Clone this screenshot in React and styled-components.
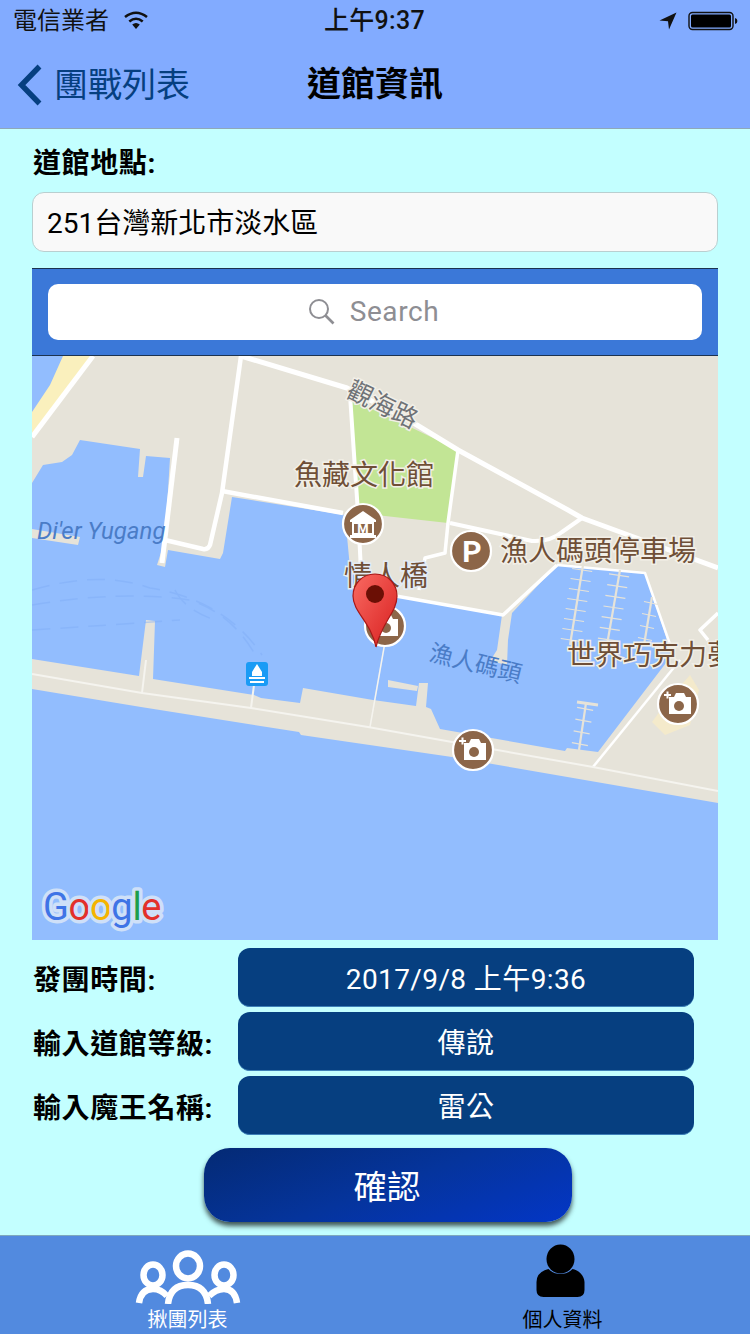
import React from "react";
import styled, { createGlobalStyle } from "styled-components";

const UI = `Roboto, "Noto Sans CJK TC", sans-serif`;

const Global = createGlobalStyle`
  html, body { margin: 0; padding: 0; background: #c3ffff; }
  * { box-sizing: border-box; }
`;

const Page = styled.div`
  width: 750px; height: 1334px; display: flex; flex-direction: column;
  overflow: hidden; background: #c3ffff; font-family: ${UI}; color: #000;
`;
const Header = styled.header`
  background: #82abff; border-bottom: 1px solid #8fa8b8; height: 129px; flex: none;
`;
const StatusBar = styled.div`
  height: 40px; display: grid; grid-template-columns: 1fr auto 1fr; align-items: center;
  padding: 1px 12px 0 13px; font-size: 24px; line-height: 30px; color: #111;
`;
const StatusSide = styled.div`
  display: flex; align-items: center; gap: ${p => p.$gap || 14}px;
  justify-content: ${p => (p.$end ? "flex-end" : "flex-start")};
`;
const Clock = styled.span`
  font-size: 25px; letter-spacing: .3px; font-weight: 500; margin-left: -2px;
`;
const NavBar = styled.nav`
  height: 88px; position: relative; display: flex; align-items: center; justify-content: center;
`;
const BackLink = styled.div`
  position: absolute; left: 17px; top: 23px; display: flex; align-items: center; gap: 11px;
  font-size: 34px; line-height: 44px; color: #063f80;
`;
const Title = styled.h1`
  margin: 0; font-size: 34px; line-height: 44px; font-weight: 700; color: #000;
`;
const Content = styled.main`
  flex: 1; display: flex; flex-direction: column; padding: 13px 32px 0;
`;
const FieldLabel = styled.div`
  font-size: 28px; line-height: 38px; font-weight: 700; white-space: nowrap; color: #000;
  padding: 3px 0 0 1px; margin-bottom: -3px; letter-spacing: .6px;
`;
const AddressInput = styled.div`
  margin-top: 12px; height: 60px; border: 1px solid #b9cfd0; border-radius: 12px; background: #f9f9f9;
  display: flex; align-items: center; padding: 0 0 3px 14px; font-size: 28px; color: #000;
`;
const MapPanel = styled.section`
  margin-top: 16px; width: 686px; display: flex; flex-direction: column;
`;
const SearchBar = styled.div`
  height: 88px; background: #3b78d8; border-top: 1px solid #1c3350; border-bottom: 1px solid #1c3350;
  padding: 15px 16px;
`;
const SearchField = styled.div`
  height: 56px; background: #fff; border-radius: 10px; display: flex; align-items: center;
  justify-content: center; gap: 15px; color: #8e8e93; font-size: 28px; letter-spacing: .6px;
  padding: 0 3px 1px 0;
`;
const MapCanvas = styled.svg`
  display: block; width: 686px; height: 584px; background: #92bdfe;
`;
const Rows = styled.div`
  margin-top: 8px; display: flex; flex-direction: column; gap: 5px;
`;
const Row = styled.div`
  display: grid; grid-template-columns: 206px 456px; align-items: center;
`;
const ValueButton = styled.div`
  height: 59px; background: #063f80; border-radius: 12px; border-bottom: 1px solid #3d80b8;
  color: #fff; font-size: 28px; letter-spacing: .4px; display: flex; align-items: center; justify-content: center;
`;
const ConfirmButton = styled.div`
  margin: 13px 0 0 172px; width: 368px; height: 74px; border-radius: 26px; color: #fff; font-size: 33.5px;
  background: linear-gradient(160deg, #042a74 0%, #05349c 50%, #0336c6 100%);
  box-shadow: 0 4px 5px rgba(20, 30, 30, .75);
  display: flex; align-items: center; justify-content: center; padding: 0 2px 2px 0;
`;
const TabBar = styled.footer`
  flex: none; height: 99px; background: #528adf; border-top: 1px solid #7ea9bd;
  display: grid; grid-template-columns: 1fr 1fr;
`;
const Tab = styled.div`
  display: flex; flex-direction: column; align-items: center; padding-top: 8px;
`;
const TabIcon = styled.svg`
  display: block; width: 112px; height: 60px;
`;
const TabLabel = styled.span`
  margin-top: 4px; font-size: 20px; line-height: 24px; color: ${p => p.$color};
`;

const Wifi = () => (
  <svg width="26" height="19" viewBox="0 0 26 19">
    <path d="M13 18 L9.2 13.6 Q13 10.6 16.8 13.6Z" fill="#111" />
    <path d="M6.3 10.5 Q13 5 19.7 10.5" fill="none" stroke="#111" strokeWidth="2.6" />
    <path d="M2 6 Q13 -2.5 24 6" fill="none" stroke="#111" strokeWidth="2.6" />
  </svg>
);
const LocationArrow = () => (
  <svg width="18" height="18" viewBox="0 0 18 18"><path d="M17.5 .5 L.5 8.5 L9 9.2 L10 17.5Z" fill="#111" /></svg>
);
const Battery = () => (
  <svg width="50" height="20" viewBox="0 0 50 20">
    <rect x="1" y="1.5" width="44" height="17" rx="3.5" fill="none" stroke="#111" strokeWidth="1.4" />
    <rect x="3" y="3.5" width="40" height="13" rx="1.5" fill="#000" />
    <path d="M47 7 q2.4 .6 2.4 3 t-2.4 3z" fill="#111" />
  </svg>
);
const Chevron = () => (
  <svg width="26" height="42" viewBox="0 0 26 42">
    <path d="M22.5 2.5 L4.5 21 L22.5 39.5" fill="none" stroke="#063f80" strokeWidth="5.4" />
  </svg>
);
const SearchIcon = () => (
  <svg width="27" height="27" viewBox="0 0 27 27" fill="none" stroke="#8e8e93">
    <circle cx="11" cy="11" r="9" strokeWidth="2" /><path d="M17.5 17.5 L25.5 25.5" strokeWidth="2.6" />
  </svg>
);

const Camera = ({ x, y }) => (
  <g transform={`translate(${x} ${y})`}>
    <circle r="20" fill="#8c6649" stroke="#fff" strokeWidth="2.2" />
    <path d="M-10 -6 h5 l2 -4 h8 l2 4 h5 v17 h-22z" fill="#fff" transform="translate(1 -1)" />
    <circle cx="1" cy="2" r="5" fill="#8c6649" />
    <path d="M-14 -9 h7 M-10.5 -12.5 v7" stroke="#fff" strokeWidth="2" />
  </g>
);
const MapLabel = ({ x, y, size = 28, color = "#6f4f37", halo = "#f2efe7", angle, children, ...rest }) => (
  <text x={x} y={y} fontSize={size} fill={color} stroke={halo} strokeWidth="3" paintOrder="stroke"
    fontFamily={UI} transform={angle ? `rotate(${angle} ${x} ${y})` : undefined} {...rest}>{children}</text>
);
const Ticks = ({ x1, y1, x2, y2, n, w = 10 }) => (
  <g stroke="#e6e3d9" fill="none">
    <path d={`M${x1} ${y1} L${x2} ${y2}`} strokeWidth="2.2" />
    {Array.from({ length: n }, (_, i) => {
      const t = (i + .5) / n, cx = x1 + (x2 - x1) * t, cy = y1 + (y2 - y1) * t;
      return <path key={i} d={`M${cx - w} ${cy - 1.5} L${cx + w} ${cy + 1.5}`} strokeWidth="1.2" />;
    })}
  </g>
);

const MapDrawing = () => (
  <MapCanvas viewBox="32 356 686 584">
    <defs>
      <linearGradient id="pin" x1="0" y1="0" x2="1" y2="1">
        <stop offset="0" stopColor="#f96a62" /><stop offset="1" stopColor="#d81f1f" />
      </linearGradient>
    </defs>
    <path d="M63 356 H93 L32 437 V412 L50 385Z" fill="#faf0bd" />
    <path d="M32 659 L139 676 L146 620 L155 621 L153 679 L254 695 L261 698 L300 703 L303 688 L373 700 L416 706 L419 683 L428 683 L426 707 L431 709 L440 729 L565 751 L567 748 L598 752 L672 655 L645 573 L557 565 L512 613 L508 640 L507 665 L490 661 L497 650 L502 615 L385 595 L362 590 L350 568 L345 515 L232 497 L223 553 L220 559 L168 550 L165 567 L157 565 L165 540 L170 458 L146 456 L143 477 L138 477 L140 449 L80 440 L72 455 L62 462 L43 465 L32 483 V437 L93 356 H718 V803 L452 757 L301 735 L299 732 L141 707 L32 689Z" fill="#e6e3d9" />
    <path d="M32 529 L80 537 L78 545 L32 538Z" fill="#e6e3d9" />
    <path d="M388 680 L418 686 L417 691 L388 687Z" fill="#e6e3d9" />
    <path d="M350 398 L458 450 L448 523 L358 513Z" fill="#c2e595" />
    <g fill="none" stroke="#7fadf7" strokeWidth="1.5" strokeDasharray="18 10" opacity=".45">
      <path d="M32 590 Q100 570 150 588 Q225 600 262 655" />
      <path d="M32 605 Q120 590 190 600 Q235 615 258 660" />
      <path d="M32 630 Q110 625 180 620" />
      <path d="M175 590 Q185 610 215 620" />
    </g>
    <g fill="none" stroke="#fff" strokeLinejoin="round">
      <path d="M93 356 L32 437" strokeWidth="5" />
      <path d="M241 356 L222 493 L210 545 Q208 550 203 549 L165 540" strokeWidth="4.5" />
      <path d="M177 438 L162 563" strokeWidth="5" />
      <path d="M222 491 L343 513" strokeWidth="4.5" />
      <path d="M241 356 L347 388 L412 422 L458 450 L568 510 L582 518 L642 540 L718 568" strokeWidth="5" />
      <path d="M350 395 L358 513 L362 590" strokeWidth="4" />
      <path d="M458 450 L448 523 L445 553 L425 558 L419 590" strokeWidth="3.5" />
      <path d="M450 523 L532 541 Q550 542 562 532 L582 518" strokeWidth="4" />
      <path d="M362 590 L503 615 L557 565" strokeWidth="3.5" />
      <path d="M557 565 L645 573 L672 650" strokeWidth="2.5" />
      <path d="M593 767 L680 660" strokeWidth="2.5" />
      <path d="M718 613 L700 630 L708 640" strokeWidth="3.5" />
    </g>
    <g fill="none" stroke="#f5f4ef">
      <path d="M32 674 L142 693 L251 708 L368 727 L452 742 L593 767 L718 791" strokeWidth="2" />
      <path d="M146 660 L142 693 M254 685 L251 708" strokeWidth="2" />
      <path d="M388 625 L370 727" strokeWidth="1.5" />
    </g>
    <Ticks x1={583} y1={565} x2={570} y2={645} n={8} />
    <Ticks x1={620} y1={570} x2={607} y2={645} n={7} />
    <Ticks x1={652} y1={597} x2={644} y2={645} n={4} w={7} />
    <Ticks x1={586} y1={703} x2={579} y2={750} n={4} w={8} />
    <path d="M577 702 L598 705" stroke="#e6e3d9" strokeWidth="3" />
    <path d="M690 675 L699 690 L690 725 L665 735 L652 722 L668 700Z" fill="#f4eacb" />

    <MapLabel x={345} y={396} size={25} color="#6f7276" angle={26}>觀海路</MapLabel>
    <MapLabel x={294} y={485}>魚藏文化館</MapLabel>
    <MapLabel x={500} y={561}>漁人碼頭停車場</MapLabel>
    <MapLabel x={344} y={586} halo="#e4ecf6">情人橋</MapLabel>
    <MapLabel x={567} y={665}>世界巧克力夢</MapLabel>
    <MapLabel x={428} y={660} size={23.5} color="#4a7cc7" halo="none" angle={14}>漁人碼頭</MapLabel>
    <MapLabel x={37} y={539} size={24} color="#4a7cc7" halo="none" fontStyle="italic">Di'er Yugang</MapLabel>

    <g transform="translate(363 524)">
      <circle r="20" fill="#8c6649" stroke="#fff" strokeWidth="2.2" />
      <path d="M-13 -4 L0 -13 L13 -4 V-2 H-13Z M-13 11 H13 V14 H-13Z" fill="#fff" />
      <path d="M-10 -1 H10 V10 H-10Z" fill="none" stroke="#fff" strokeWidth="2" />
      <text x="0" y="9" textAnchor="middle" fontSize="13" fontWeight="700" fill="#fff" fontFamily={UI}>M</text>
    </g>
    <g transform="translate(471 551)">
      <circle r="20" fill="#8c6649" stroke="#fff" strokeWidth="2.2" />
      <text x="1" y="11" textAnchor="middle" fontSize="30" fontWeight="700" fill="#fff" fontFamily={UI}>P</text>
    </g>
    <Camera x={385} y={626} />
    <Camera x={678} y={704} />
    <Camera x={473} y={750} />

    <rect x="246" y="662" width="22" height="24" rx="3" fill="#1a9bf5" />
    <path d="M257 664 L262 672 V676 H252 V672Z M249 677 H265 V679 H249Z M250 681 H264 V683 H250Z" fill="#fff" />

    <path d="M375 574 C388 574 397 584 397 596 C397 612 382 622 376 647 C371 622 353 612 353 596 C353 584 362 574 375 574Z" fill="url(#pin)" stroke="#a81717" strokeWidth="1.2" />
    <circle cx="375" cy="594" r="9" fill="#6b0f05" />

    <text x="43" y="920" fontSize="38" fontFamily={UI} fontWeight="400" stroke="#cfe0f8" strokeWidth="7" paintOrder="stroke" strokeLinejoin="round" letterSpacing="-.3">
      <tspan fill="#3f74e6">G</tspan><tspan fill="#e3302b">o</tspan><tspan fill="#f5b400">o</tspan><tspan fill="#3f74e6">g</tspan><tspan fill="#1e9e4a">l</tspan><tspan fill="#e3302b">e</tspan>
    </text>
  </MapCanvas>
);

const GroupIcon = () => (
  <TabIcon viewBox="132 1244 112 60" fill="none" stroke="#fff" strokeWidth="6.5">
    <ellipse cx="188" cy="1266" rx="12" ry="12.5" />
    <ellipse cx="153" cy="1275" rx="9.5" ry="10.5" />
    <ellipse cx="224" cy="1275" rx="9.5" ry="10.5" />
    <path d="M139 1303 Q141 1289 153 1289 Q161 1289 167 1296" />
    <path d="M237 1303 Q235 1289 224 1289 Q216 1289 209 1296" />
    <path d="M168 1304 Q170 1285 188 1285 Q206 1285 208 1304" />
  </TabIcon>
);
const PersonIcon = () => (
  <TabIcon viewBox="506.5 1244 112 60" fill="#000">
    <ellipse cx="560" cy="1259" rx="14" ry="14.5" />
    <path d="M536 1290 V1282 Q536 1272 548 1269 C552 1273 556 1274 560 1274 S568 1273 572 1269 C584 1272 584 1282 584 1282 V1290 Q584 1297 577 1297 H543 Q536 1297 536 1290Z" />
  </TabIcon>
);

export default function App() {
  return (
    <>
      <Global />
      <Page>
        <Header>
          <StatusBar>
            <StatusSide><span>電信業者</span><Wifi /></StatusSide>
            <Clock>上午9:37</Clock>
            <StatusSide $end $gap={11}><LocationArrow /><Battery /></StatusSide>
          </StatusBar>
          <NavBar>
            <BackLink><Chevron /><span>團戰列表</span></BackLink>
            <Title>道館資訊</Title>
          </NavBar>
        </Header>
        <Content>
          <FieldLabel>道館地點:</FieldLabel>
          <AddressInput>251台灣新北市淡水區</AddressInput>
          <MapPanel>
            <SearchBar>
              <SearchField><SearchIcon /><span>Search</span></SearchField>
            </SearchBar>
            <MapDrawing />
          </MapPanel>
          <Rows>
            <Row><FieldLabel>發團時間:</FieldLabel><ValueButton>2017/9/8 上午9:36</ValueButton></Row>
            <Row><FieldLabel>輸入道館等級:</FieldLabel><ValueButton>傳說</ValueButton></Row>
            <Row><FieldLabel>輸入魔王名稱:</FieldLabel><ValueButton>雷公</ValueButton></Row>
          </Rows>
          <ConfirmButton>確認</ConfirmButton>
        </Content>
        <TabBar>
          <Tab><GroupIcon /><TabLabel $color="#fff">揪團列表</TabLabel></Tab>
          <Tab><PersonIcon /><TabLabel $color="#000">個人資料</TabLabel></Tab>
        </TabBar>
      </Page>
    </>
  );
}
